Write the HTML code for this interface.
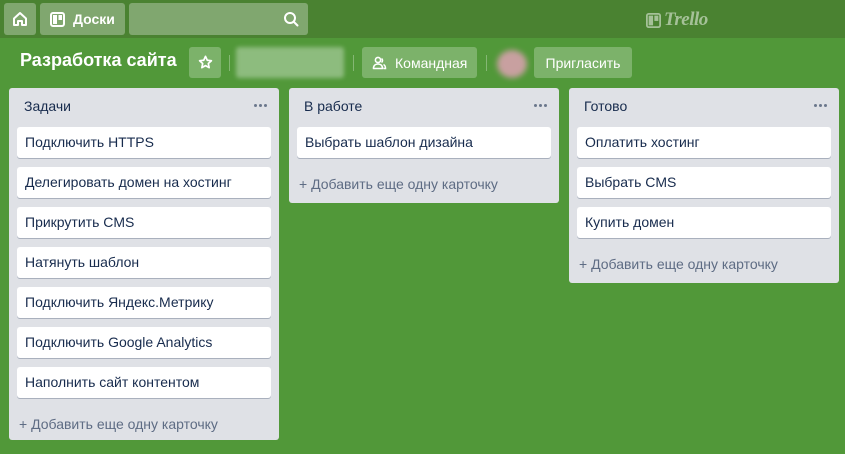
<!DOCTYPE html>
<html><head><meta charset="utf-8"><style>
*{box-sizing:border-box;margin:0;padding:0}
body{width:845px;height:454px;overflow:hidden;background:#519839;font-family:"Segoe UI","Liberation Sans","DejaVu Sans",sans-serif;position:relative;color:#172b4d}
.top{position:absolute;left:0;top:0;width:845px;height:38px;background:#4a8231}
.hb{position:absolute;top:3px;height:32px;background:rgba(255,255,255,.3);border-radius:3px;color:#fff;font-weight:bold;font-size:14px;display:flex;align-items:center}
.bb{position:absolute;top:47px;height:31px;background:rgba(255,255,255,.25);border-radius:3px;color:#fff;font-size:14px;display:flex;align-items:center}
.sep{position:absolute;top:55px;width:1px;height:16px;background:rgba(255,255,255,.3)}
.list{position:absolute;width:270px;background:#dfe1e6;border-radius:3px}
.lh{position:absolute;left:15px;top:10px;font-size:14px;color:#172b4d}
.dots{position:absolute;right:12px;top:16px;display:flex;gap:2px}
.dots i{width:3px;height:3px;border-radius:50%;background:#6b778c}
.card{position:absolute;left:8px;width:254px;height:31px;background:#fff;border-radius:3px;box-shadow:0 1px 0 rgba(9,30,66,.25);font-size:14px;padding:7px 8px;color:#172b4d}
.add{position:absolute;left:10px;font-size:14px;color:#5e6c84}
</style></head><body>
<div class="top"></div>
<div class="hb" style="left:4px;width:32px;justify-content:center"><svg width="18" height="18" viewBox="0 0 18 18"><path d="M3 8.5L9 3l6 5.5V15H11v-4H7v4H3z" fill="none" stroke="#fff" stroke-width="2" stroke-linejoin="round"/></svg></div>
<div class="hb" style="left:40px;width:85px"><svg style="margin:0 8px 0 10px" width="15" height="15" viewBox="0 0 15 15"><rect x="1" y="1" width="13" height="13" rx="2" fill="none" stroke="#fff" stroke-width="2"/><rect x="3" y="3" width="4" height="9" fill="#fff"/><rect x="8.5" y="3" width="3.5" height="5" fill="#fff"/></svg>Доски</div>
<div class="hb" style="left:129px;width:179px"><svg style="position:absolute;right:9px;top:8px" width="16" height="16" viewBox="0 0 16 16"><circle cx="7" cy="7" r="5" fill="none" stroke="#fff" stroke-width="2"/><path d="M11 11l3.5 3.5" stroke="#fff" stroke-width="2" stroke-linecap="round"/></svg></div>
<div style="position:absolute;left:646px;top:9px;display:flex;align-items:center;color:rgba(255,255,255,.5)"><svg width="15" height="15" viewBox="0 0 17 17"><rect x="1" y="1" width="15" height="15" rx="2" fill="none" stroke="rgba(255,255,255,.5)" stroke-width="2"/><rect x="3" y="3" width="5" height="11" fill="rgba(255,255,255,.5)"/><rect x="9.5" y="3" width="4.5" height="6" fill="rgba(255,255,255,.5)"/></svg><span style="font-family:'Liberation Serif',serif;font-style:italic;font-size:19px;margin-left:3px;font-weight:bold;letter-spacing:-0.5px">Trello</span></div>
<div style="position:absolute;left:20px;top:50px;color:#fff;font-size:18px;font-weight:bold">Разработка сайта</div>
<div class="bb" style="left:189px;width:32px;justify-content:center"><svg width="15" height="15" viewBox="0 0 16 16"><path d="M8 1.5l1.9 4.1 4.4.5-3.3 3 .9 4.4L8 11.3 4.1 13.5 5 9.1l-3.3-3 4.4-.5z" fill="none" stroke="#fff" stroke-width="1.8" stroke-linejoin="round"/></svg></div>
<div class="sep" style="left:229px"></div>
<div class="bb" style="left:236px;width:108px;background:rgba(255,255,255,.35);filter:blur(2px)"></div>
<div class="sep" style="left:353px"></div>
<div class="bb" style="left:362px;width:115px"><svg style="margin:0 8px 0 10px" width="15" height="14" viewBox="0 0 15 14"><circle cx="6" cy="4" r="2.6" fill="none" stroke="#fff" stroke-width="1.6"/><path d="M1.5 12.5c0-3 2-4.5 4.5-4.5s4.5 1.5 4.5 4.5z" fill="none" stroke="#fff" stroke-width="1.6" stroke-linejoin="round"/><path d="M9.5 2.5a2.4 2.4 0 010 4M11.5 8.5c1.3.6 2 1.8 2 4h-2" fill="none" stroke="#fff" stroke-width="1.5"/></svg>Командная</div>
<div class="sep" style="left:486px"></div>
<div style="position:absolute;left:497px;top:50px;width:30px;height:28px;border-radius:50%;background:#c8a0a0;filter:blur(3px)"></div>
<div class="bb" style="left:534px;width:98px;justify-content:center">Пригласить</div>

<div class="list" style="left:9px;top:88px;height:352px">
<div class="lh">Задачи</div><div class="dots"><i></i><i></i><i></i></div>
<div class="card" style="top:39px">Подключить HTTPS</div>
<div class="card" style="top:79px">Делегировать домен на хостинг</div>
<div class="card" style="top:119px">Прикрутить CMS</div>
<div class="card" style="top:159px">Натянуть шаблон</div>
<div class="card" style="top:199px">Подключить Яндекс.Метрику</div>
<div class="card" style="top:239px">Подключить Google Analytics</div>
<div class="card" style="top:279px">Наполнить сайт контентом</div>
<div class="add" style="top:328px">+ Добавить еще одну карточку</div>
</div>
<div class="list" style="left:289px;top:88px;height:115px">
<div class="lh">В работе</div><div class="dots"><i></i><i></i><i></i></div>
<div class="card" style="top:39px">Выбрать шаблон дизайна</div>
<div class="add" style="top:88px">+ Добавить еще одну карточку</div>
</div>
<div class="list" style="left:569px;top:88px;height:195px">
<div class="lh">Готово</div><div class="dots"><i></i><i></i><i></i></div>
<div class="card" style="top:39px">Оплатить хостинг</div>
<div class="card" style="top:79px">Выбрать CMS</div>
<div class="card" style="top:119px">Купить домен</div>
<div class="add" style="top:168px">+ Добавить еще одну карточку</div>
</div>
</body></html>
